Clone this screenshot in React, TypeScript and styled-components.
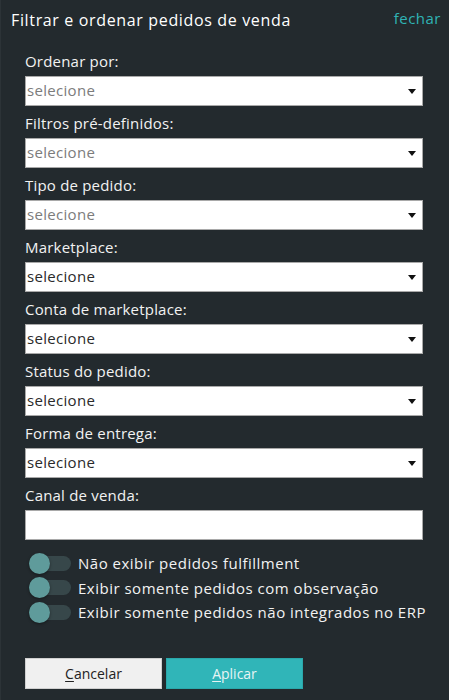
import React from "react";
import styled, { createGlobalStyle } from "styled-components";

const GlobalStyle = createGlobalStyle`
  html, body {
    margin: 0;
    padding: 0;
    background: #232a2e;
  }
  body {
    font-family: "Open Sans", "Liberation Sans", sans-serif;
  }
`;

type SelectField = { label: string; placeholder?: boolean };

const selects: SelectField[] = [
  { label: "Ordenar por:", placeholder: true },
  { label: "Filtros pré-definidos:", placeholder: true },
  { label: "Tipo de pedido:", placeholder: true },
  { label: "Marketplace:" },
  { label: "Conta de marketplace:" },
  { label: "Status do pedido:" },
  { label: "Forma de entrega:" },
];

const toggles = [
  "Não exibir pedidos fulfillment",
  "Exibir somente pedidos com observação",
  "Exibir somente pedidos não integrados no ERP",
];

const App = () => {
  return (
    <>
      <GlobalStyle />
      <Panel>
        <Header>
          <span className="title">Filtrar e ordenar pedidos de venda</span>
          <a className="close">fechar</a>
        </Header>
        <Form>
          {selects.map((s) => (
            <Field key={s.label}>
              <Label>{s.label}</Label>
              <SelectBox $placeholder={s.placeholder}>
                <span>selecione</span>
                <Caret />
              </SelectBox>
            </Field>
          ))}
          <Field>
            <Label>Canal de venda:</Label>
            <TextInput type="text" />
          </Field>
        </Form>
        <Toggles>
          {toggles.map((t) => (
            <ToggleRow key={t}>
              <Switch>
                <span className="knob" />
              </Switch>
              <span>{t}</span>
            </ToggleRow>
          ))}
        </Toggles>
        <Actions>
          <Button>
            <u>C</u>ancelar
          </Button>
          <Button $primary>
            <u>A</u>plicar
          </Button>
        </Actions>
      </Panel>
    </>
  );
};

const Panel = styled.div`
  width: 449px;
  height: 700px;
  box-sizing: border-box;
  background: #232a2e;
  border-left: 1px solid #2c3337;
  color: #ffffff;
  padding: 10px 8px 0 10px;
`;

const Header = styled.div`
  display: flex;
  justify-content: space-between;
  align-items: flex-start;
  height: 20px;
  margin-bottom: 22px;

  .title {
    font-size: 16px;
    letter-spacing: 0.65px;
    line-height: 20px;
    color: #ffffff;
  }

  .close {
    font-size: 15px;
    letter-spacing: 0.5px;
    line-height: 16px;
    color: #2fb3b5;
    cursor: pointer;
  }
`;

const Form = styled.div`
  display: flex;
  flex-direction: column;
  gap: 8px;
  padding-left: 14px;
  width: 398px;
`;

const Field = styled.div`
  display: flex;
  flex-direction: column;
  gap: 6px;
`;

const Label = styled.label`
  font-size: 15px;
  letter-spacing: 0.2px;
  line-height: 18px;
  color: #f2f2f2;
`;

const SelectBox = styled.div<{ $placeholder?: boolean }>`
  position: relative;
  height: 30px;
  box-sizing: border-box;
  background: #ffffff;
  border: 1px solid #a9a9a9;
  display: flex;
  align-items: center;
  padding: 0 1px 2px;
  font-size: 15px;
  letter-spacing: 0.3px;
  color: ${(p) => (p.$placeholder ? "#7c7c7c" : "#2a2a2a")};
`;

const Caret = styled.span`
  position: absolute;
  right: 6px;
  top: 12px;
  width: 0;
  height: 0;
  border-left: 4px solid transparent;
  border-right: 4px solid transparent;
  border-top: 5px solid #111111;
`;

const TextInput = styled.input`
  height: 30px;
  box-sizing: border-box;
  border: 1px solid #a9a9a9;
  background: #ffffff;
  margin: 0;
  padding: 0 4px;
  outline: none;
`;

const Toggles = styled.div`
  display: flex;
  flex-direction: column;
  margin-top: 11px;
  padding-left: 18px;
`;

const ToggleRow = styled.label`
  display: flex;
  align-items: center;
  gap: 7px;
  height: 24.5px;
  font-size: 15px;
  letter-spacing: 0.5px;
  color: #f2f2f2;
`;

const Switch = styled.span`
  position: relative;
  width: 42px;
  height: 15px;
  border-radius: 8px;
  background: #37474a;
  flex-shrink: 0;

  .knob {
    position: absolute;
    left: 0;
    top: -3px;
    width: 21px;
    height: 21px;
    border-radius: 50%;
    background: #5f9b9b;
    box-shadow: 0 1px 3px rgba(0, 0, 0, 0.4);
  }
`;

const Actions = styled.div`
  display: flex;
  gap: 4px;
  margin-top: 33px;
  padding-left: 14px;
`;

const Button = styled.button<{ $primary?: boolean }>`
  width: 137px;
  height: 31px;
  box-sizing: border-box;
  font-family: inherit;
  font-size: 14px;
  cursor: pointer;
  border: 1px solid ${(p) => (p.$primary ? "#2aa8ab" : "#d0d0d0")};
  background: ${(p) => (p.$primary ? "#30b5b8" : "#f0f0f0")};
  color: ${(p) => (p.$primary ? "#e6f4f4" : "#222222")};

  u {
    text-decoration-thickness: 1px;
    text-underline-offset: 2px;
  }
`;

export default App;
